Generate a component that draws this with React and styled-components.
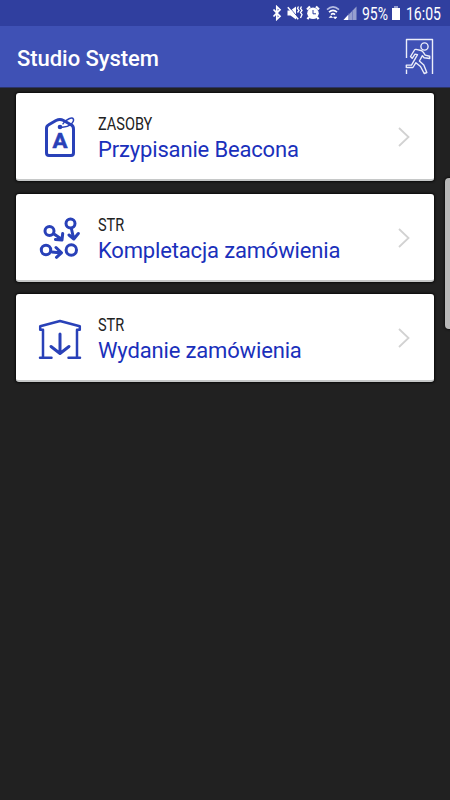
import React from "react";
import styled, { createGlobalStyle } from "styled-components";

const menu = [
  { group: "ZASOBY", name: "Przypisanie Beacona", Icon: TagIcon },
  { group: "STR", name: "Kompletacja zamówienia", Icon: PickingIcon },
  { group: "STR", name: "Wydanie zamówienia", Icon: WarehouseIcon },
];

export default function App() {
  return (
    <Screen>
      <GlobalStyle />
      <StatusBar>
        <StatusIcons />
        <StatusText $width={27}>95%</StatusText>
        <Battery />
        <StatusText $width={37}>16:05</StatusText>
      </StatusBar>
      <Header>
        <h1>Studio System</h1>
        <ExitIcon />
      </Header>
      <List>
        {menu.map(({ group, name, Icon }) => (
          <Card key={name}>
            <Icon />
            <Labels>
              <Group>{group}</Group>
              <Name>{name}</Name>
            </Labels>
            <Chevron width="14" height="22" viewBox="0 0 14 22">
              <path d="M2 2l9.5 9L2 20" />
            </Chevron>
          </Card>
        ))}
      </List>
      <ScrollHandle />
    </Screen>
  );
}

function StatusIcons() {
  return (
    <StatusSvg width="86" height="16" viewBox="0 0 86 16">
      <path d="M1.500 4.500l6.500 6.800-3.200 3V1.700l3.200 3-6.500 6.800" fill="none" stroke="#fff" strokeWidth="1.700" />
      <path d="M15.500 5.500h3l5.500-4v13l-5.500-4h-3z" fill="#fff" />
      <path d="M17 2l10 11.500" stroke="#303f9f" strokeWidth="1" />
      <path d="M15.800 2.200l10.400 12" stroke="#fff" strokeWidth="1.500" />
      <path
        d="M26.500 1.500l-1 2 1.500 2-1.500 2M29.500 1.500l-1 2 1.500 2-1.500 2 1.500 2-1.500 3.500"
        fill="none"
        stroke="#fff"
        strokeWidth="1.300"
      />
      <circle cx="41" cy="8.300" r="5.800" fill="#fff" />
      <path d="M35 4.500l3-3M47 4.500l-3-3M37 12l-1.500 2.200M45 12l1.500 2.200" stroke="#fff" strokeWidth="2.200" />
      <path d="M41 5v3.800h3" fill="none" stroke="#303f9f" strokeWidth="1" />
      <path d="M55 4.700q6-5.600 12 0" fill="none" stroke="#b5bce2" strokeWidth="1.600" />
      <path d="M57 7.200q4-3.800 8 0M59 9.600q2-1.900 4 0" fill="none" stroke="#fff" strokeWidth="1.600" />
      <path d="M57.200 12.500l1.700-1.700 1.700 1.700zM61.500 12l1.700 2 1.700-2z" fill="#fff" stroke="#fff" strokeWidth=".6" />
      <path d="M84.500 1.500v13.500h-13z" fill="#969fcf" />
      <path d="M76.500 9.500v5.500h-5z" fill="#fff" />
      <path d="M76.800 8v7M80.500 5v10" stroke="#606cb5" strokeWidth=".6" />
    </StatusSvg>
  );
}

function ExitIcon() {
  return (
    <ExitSvg width="29" height="38" viewBox="0 0 29 38">
      <path d="M1.500 20V1.500h26V36M1.500 31.500V36" />
      <circle cx="19.500" cy="8.500" r="3.600" />
      <path d="M5.500 18.500l4-6.500q.5-.8 1.500-.6l5 1.100q1.500.4 2.200 1.600l2 3 4.500 1.200v2.200l-5.600-.8-1.700-2-3 5.300 4.400 4 3 7.500-2.600 1-3.700-7-4.600-3.800-3 4.800H1.300v-2.400h5.200l6-10.500-2.500-.5-2.800 4.200z" />
    </ExitSvg>
  );
}

function TagIcon() {
  return (
    <IconSvg width="60" height="60" viewBox="0 0 60 60">
      <path d="M26 12.500l-7.300 4.300q-2.200 1.200-2.200 3.500V45q0 2.500 2.500 2.500h22q2.500 0 2.500-2.500V21q0-3-2.500-4.300L33.500 12.500q-3.500-2-7.500 0z" />
      <path d="M30 19q7 .8 11-2.700c4.500-4.400 2.500-7.500-2-5.500q-4 1.800-6 5" strokeWidth="1.500" />
      <circle cx="30" cy="19" r="2.300" fill="#2941b8" stroke="none" />
      <text x="22.500" y="40" textLength="15" lengthAdjust="spacingAndGlyphs">
        A
      </text>
    </IconSvg>
  );
}

function PickingIcon() {
  return (
    <IconSvg width="60" height="60" viewBox="0 0 60 60">
      <circle cx="19.500" cy="22" r="4.500" />
      <circle cx="40.500" cy="14.500" r="4.500" />
      <circle cx="16" cy="41" r="4.700" />
      <circle cx="41.300" cy="41" r="5.200" />
      <path d="M24 25l8 5.500M32.700 24.500l-.7 6.500-6.600-.5M41.500 20l2 9M39 26l4.800 4 4.500-5.500M22 43l9 1M26 38.500l5.500 5.300-5 4.500" />
    </IconSvg>
  );
}

function WarehouseIcon() {
  return (
    <IconSvg width="60" height="60" viewBox="0 0 60 60">
      <path d="M13 20.800h-2.800v-3.500L30 12l19.800 5.300v3.500H47M13 21v27.500M47 21v27.500M10 48.800h11.500M38.500 48.800H50" strokeWidth="2.500" />
      <path d="M30 25v19M21 37.500l9 7 9-7" />
    </IconSvg>
  );
}

const GlobalStyle = createGlobalStyle`
  * {
    box-sizing: border-box;
  }

  body {
    margin: 0;
    background: #212121;
    font-family: Roboto, sans-serif;
  }
`;

const Screen = styled.div`
  position: relative;
  width: 450px;
  height: 800px;
  overflow: hidden;
  background: #212121;
`;

const StatusBar = styled.div`
  display: flex;
  align-items: center;
  height: 26px;
  padding-left: 272px;
  background: #303f9f;
  color: #fff;
`;

const StatusSvg = styled.svg`
  flex: none;
  margin: 0 4px 0 0;
`;

const StatusText = styled.span`
  flex: none;
  width: ${(p) => p.$width}px;
  font-size: 17.5px;
  line-height: 26px;
  white-space: nowrap;
  transform: translateY(1px) scaleX(0.8);
  transform-origin: left;
`;

const Battery = styled.div`
  flex: none;
  width: 8px;
  height: 12px;
  margin: 2px 6px 0 3px;
  background: #fff;

  &::before {
    content: "";
    display: block;
    width: 4px;
    height: 2px;
    margin: 0 auto;
    background: #969fcf;
    transform: translateY(-2px);
  }
`;

const Header = styled.header`
  display: flex;
  align-items: center;
  justify-content: space-between;
  height: 62px;
  padding: 0 16px 0 17px;
  background: #3f51b5;
  border-bottom: 1px solid #2b3365;
  color: #fff;

  h1 {
    margin: 3px 0 0;
    font-size: 22px;
    font-weight: 500;
    letter-spacing: -0.05px;
  }
`;

const ExitSvg = styled.svg`
  fill: none;
  stroke: #eceefa;
  stroke-width: 1.4;
  stroke-linejoin: round;
`;

const List = styled.main`
  display: flex;
  flex-direction: column;
  gap: 12.5px;
  padding: 5px 16px;
`;

const Card = styled.div`
  display: flex;
  align-items: center;
  height: 88px;
  padding: 2px 23px 0 14px;
  background: #fff;
  border-bottom: 2px solid #c6c8c8;
  border-radius: 3px;
  box-shadow: 0 0 2px 1px #0b0b0b;
`;

const IconSvg = styled.svg`
  flex: none;
  margin-top: 2px;
  fill: none;
  stroke: #2941b8;
  stroke-width: 3;
  stroke-linecap: round;
  stroke-linejoin: round;

  text {
    fill: #2941b8;
    stroke: #2941b8;
    stroke-width: 0.5;
    font-size: 19.5px;
    font-weight: 700;
  }
`;

const Labels = styled.div`
  flex: 1;
  padding: 4px 0 0 8px;
  white-space: nowrap;
`;

const Group = styled.div`
  color: #222;
  font-size: 17.5px;
  line-height: 22px;
  transform: scaleX(0.83);
  transform-origin: left;
`;

const Name = styled.div`
  color: #1a30bb;
  font-size: 22px;
  line-height: 30px;
  letter-spacing: -0.16px;
`;

const Chevron = styled.svg`
  fill: none;
  stroke: #d2d2d2;
  stroke-width: 1.8;
`;

const ScrollHandle = styled.div`
  position: absolute;
  top: 178px;
  right: -4px;
  width: 9px;
  height: 151px;
  background: #b8b8b8;
  border-radius: 4px;
  box-shadow: 0 0 2px 1px #111;
`;
